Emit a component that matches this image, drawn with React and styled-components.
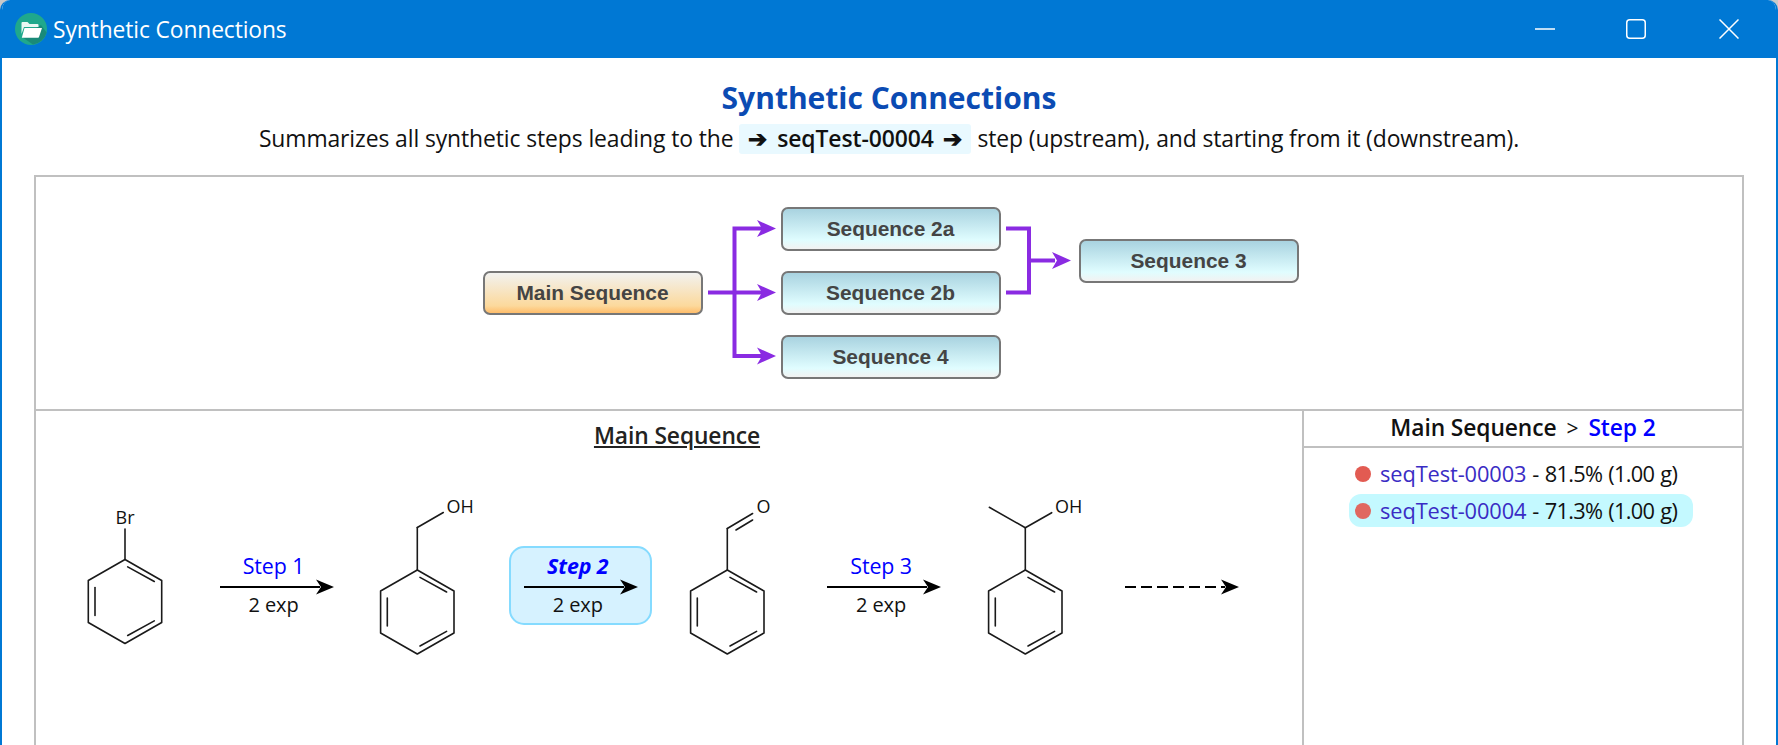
import React from "react";
import styled, { createGlobalStyle } from "styled-components";

const Global = createGlobalStyle`
  html, body { margin: 0; padding: 0; height: 745px; overflow: hidden; background: #c9c9c9; }
  body { font-family: "Open Sans", "Noto Sans", sans-serif; color: #111; }
`;

const Window = styled.div`
  box-sizing: border-box;
  height: 745px;
  display: flex;
  flex-direction: column;
  overflow: hidden;
  background: #fff;
  border-radius: 10px 10px 0 0;
  border-left: 2px solid #0078d4;
  border-right: 2px solid #0078d4;
`;

const TitleBar = styled.header`
  flex: none;
  height: 58px;
  margin: 0 -2px;
  display: flex;
  align-items: center;
  padding: 0 39px 0 15px;
  background: #0078d4;
  color: #fff;
`;

const AppTitle = styled.div`
  margin-left: 6px;
  padding-top: 1px;
  font-size: 22.8px;
  letter-spacing: -0.1px;
  flex: 1;
`;

const Controls = styled.div`
  display: flex;
  gap: 71px;
  align-items: center;
  svg:last-child { margin-left: 2px; }
`;

const Content = styled.main`
  flex: 1;
  min-height: 0;
  padding: 0 32px;
  display: flex;
  flex-direction: column;
`;

const Heading = styled.h1`
  margin: 17px 0 0;
  height: 46px;
  line-height: 46px;
  text-align: center;
  font-size: 30px;
  font-weight: 700;
  color: #0b4bb3;
`;

const Subtitle = styled.p`
  margin: -1px 0 0;
  height: 38px;
  line-height: 38px;
  text-align: center;
  font-size: 22.9px;
  letter-spacing: -0.1px;
  color: #111;
  white-space: nowrap;
`;

const Pill = styled.span`
  display: inline-block;
  height: 30px;
  line-height: 30px;
  margin: 0 6px;
  padding: 0 9px;
  word-spacing: 4px;
  background: #e9f9ff;
  border-radius: 3px;
  font-weight: 600;
`;

const Frame = styled.section`
  margin-top: 17px;
  flex: none;
  height: 640px;
  border: 2px solid #c0c0c0;
  display: flex;
  flex-direction: column;
`;

const ChartPanel = styled.div`
  flex: none;
  height: 232px;
  box-sizing: content-box;
  border-bottom: 2px solid #c0c0c0;
  display: flex;
  align-items: center;
  justify-content: center;
  padding-left: 3px;
`;

const Diagram = styled.div`
  position: relative;
  width: 816px;
  height: 172px;
`;

const Links = styled.svg`
  position: absolute;
  left: 0;
  top: 0;
`;

const Node = styled.div`
  position: absolute;
  box-sizing: border-box;
  width: 220px;
  height: 44px;
  left: ${(p) => p.$x}px;
  top: ${(p) => p.$y}px;
  display: flex;
  align-items: center;
  justify-content: center;
  border: 2px solid #777;
  border-radius: 7px;
  background: ${(p) =>
    p.$main
      ? "linear-gradient(#f2f2f0 0%, #fcd99c 82%, #ffbd6b 100%)"
      : "linear-gradient(#a9d3e0 0%, #e0fdff 78%, #f2f2f2 100%)"};
  font-family: "Liberation Sans", Arial, sans-serif;
  font-weight: 700;
  font-size: 20.9px;
  color: #444;
`;

const Lower = styled.div`
  flex: 1;
  display: flex;
  min-height: 0;
`;

const SchemePanel = styled.div`
  flex: 1;
  min-width: 0;
`;

const SchemeTitle = styled.h2`
  margin: 9px 0 38px;
  padding-left: 16px;
  height: 32px;
  line-height: 32px;
  text-align: center;
  font-size: 22.8px;
  font-weight: 600;
  letter-spacing: -0.1px;
  text-decoration: underline;
  color: #222;
`;

const SchemeRow = styled.div`
  display: flex;
  align-items: flex-start;
`;

const Reaction = styled.div`
  flex: none;
  box-sizing: border-box;
  width: 143px;
  height: 79px;
  margin-top: 56px;
  display: flex;
  flex-direction: column;
  align-items: center;
  border: 2px solid ${(p) => (p.$active ? "#85dbff" : "transparent")};
  border-radius: 15px;
  background: ${(p) => (p.$active ? "#d6f2ff" : "transparent")};
`;

const StepLabel = styled.div`
  height: 30.7px;
  padding-right: 6px;
  line-height: 35px;
  font-size: 21.4px;
  letter-spacing: -0.1px;
  color: #0000ff;
  font-weight: ${(p) => (p.$active ? 700 : 400)};
  font-style: ${(p) => (p.$active ? "italic" : "normal")};
`;

const ExpCount = styled.div`
  padding-right: 6px;
  line-height: 20px;
  font-size: 20px;
  letter-spacing: -0.1px;
  color: #111;
`;

const StepArrowSvg = styled.svg`
  flex: none;
  display: block;
`;

const DetailPanel = styled.aside`
  flex: none;
  box-sizing: border-box;
  width: 440px;
  border-left: 2px solid #c0c0c0;
`;

const DetailHeader = styled.div`
  box-sizing: border-box;
  height: 37px;
  line-height: 33px;
  border-bottom: 2px solid #c0c0c0;
  text-align: center;
  font-size: 22.8px;
  letter-spacing: -0.1px;
  font-weight: 600;
  color: #111;
  white-space: nowrap;
`;

const Crumb = styled.span`
  font-weight: 400;
  font-size: 21px;
  margin: 0 10px;
`;

const StepName = styled.span`
  color: #0000ff;
`;

const ExpList = styled.ul`
  list-style: none;
  margin: 0;
  padding: 9px 4px 0 0;
  display: flex;
  flex-direction: column;
  align-items: center;
  gap: 4px;
`;

const ExpRow = styled.li`
  box-sizing: border-box;
  height: 33px;
  width: 344px;
  padding-left: 6px;
  display: flex;
  align-items: center;
  border-radius: 12px;
  background: ${(p) => (p.$active ? "#c4f9ff" : "transparent")};
  font-size: 21.8px;
  letter-spacing: -0.1px;
  white-space: pre;
  color: #111;
`;

const Dot = styled.span`
  flex: none;
  width: 16px;
  height: 16px;
  border-radius: 50%;
  margin-right: 9px;
  background: #e25b52;
  opacity: ${(p) => (p.$active ? 0.92 : 1)};
`;

const ExpLink = styled.span`
  color: #3a2cc4;
`;

const ExpStat = styled.span`
  letter-spacing: -0.7px;
  word-spacing: 1px;
`;

const AtomLabel = styled.text`
  font-family: "Open Sans", "Noto Sans", sans-serif;
  font-size: 18px;
  fill: #111;
`;

const Bond = ({ x1, y1, x2, y2 }) => (
  <line x1={x1} y1={y1} x2={x2} y2={y2} stroke="#1a1a1a" strokeWidth="1.6" strokeLinecap="round" />
);

const Benzene = ({ cx, cy }) => (
  <g fill="none" stroke="#1a1a1a" strokeWidth="1.6" strokeLinecap="round" strokeLinejoin="round">
    <polygon
      points={`${cx},${cy - 42} ${cx + 36.7},${cy - 21} ${cx + 36.7},${cy + 21} ${cx},${cy + 42} ${cx - 36.7},${cy + 21} ${cx - 36.7},${cy - 21}`}
    />
    <line x1={cx + 2.7} y1={cy - 34.6} x2={cx + 29.3} y2={cy - 20} />
    <line x1={cx + 2.7} y1={cy + 34} x2={cx + 29.3} y2={cy + 19.4} />
    <line x1={cx - 30} y1={cy - 14} x2={cx - 30} y2={cy + 14} />
  </g>
);

const Mol = ({ width, children }) => (
  <svg width={width} height="180" viewBox={`0 0 ${width} 180`} style={{ flex: "none", display: "block" }}>
    {children}
  </svg>
);

const StepArrow = ({ dashed }) => (
  <StepArrowSvg width="114" height="16" viewBox="0 0 114 16">
    <line x1="0" y1="8" x2="100" y2="8" stroke="#000" strokeWidth="2" strokeDasharray={dashed ? "11 5" : undefined} />
    <path d="M96 0.5 L114 8 L96 15.5 L101 8 Z" fill="#000" />
  </StepArrowSvg>
);

const Reactions = ({ label, active }) => (
  <Reaction $active={active}>
    <StepLabel $active={active}>{label}</StepLabel>
    <StepArrow />
    <ExpCount>2 exp</ExpCount>
  </Reaction>
);

const AppIcon = () => (
  <svg width="32" height="32" viewBox="0 0 32 32" style={{ flex: "none" }}>
    <circle cx="16" cy="16" r="16" fill="#1fa88c" />
    <path d="M7 24 L18 31.5 A16 16 0 0 0 31.6 19.5 L26 12 Z" fill="#1a8a78" />
    <path d="M6.5 10 a1 1 0 0 1 1 -1 h5 l2 2 h8 a1 1 0 0 1 1 1 v2 H9 l-2.5 7 Z" fill="#e9f7f3" />
    <path d="M9.5 15 H27 L24 24 a1 1 0 0 1 -1 .7 H6.8 Z" fill="#fff" />
  </svg>
);

const ControlIcons = () => (
  <Controls>
    <svg width="20" height="20" viewBox="0 0 20 20">
      <line x1="0" y1="10" x2="20" y2="10" stroke="#fff" strokeWidth="1.5" />
    </svg>
    <svg width="20" height="20" viewBox="0 0 20 20">
      <rect x="0.75" y="0.75" width="18.5" height="18.5" rx="3" fill="none" stroke="#fff" strokeWidth="1.5" />
    </svg>
    <svg width="20" height="20" viewBox="0 0 20 20">
      <path d="M0.5 0.5 L19.5 19.5 M19.5 0.5 L0.5 19.5" stroke="#fff" strokeWidth="1.5" />
    </svg>
  </Controls>
);

const PURPLE = "#8a2be2";
const Head = ({ x, y }) => (
  <path d={`M${x - 19} ${y - 8.5} L${x} ${y} L${x - 19} ${y + 8.5} L${x - 14} ${y} Z`} fill={PURPLE} />
);

const nodes = [
  { label: "Main Sequence", x: 0, y: 64, main: true },
  { label: "Sequence 2a", x: 298, y: 0 },
  { label: "Sequence 2b", x: 298, y: 64 },
  { label: "Sequence 4", x: 298, y: 128 },
  { label: "Sequence 3", x: 596, y: 32 },
];

export default function App() {
  return (
    <>
      <Global />
      <Window>
        <TitleBar>
          <AppIcon />
          <AppTitle>Synthetic Connections</AppTitle>
          <ControlIcons />
        </TitleBar>
        <Content>
          <Heading>Synthetic Connections</Heading>
          <Subtitle>
            Summarizes all synthetic steps leading to the<Pill>➔ seqTest-00004 ➔</Pill>step (upstream), and starting from it (downstream).
          </Subtitle>
          <Frame>
            <ChartPanel>
              <Diagram>
                <Links width="816" height="172" viewBox="0 0 816 172">
                  <g fill="none" stroke={PURPLE} strokeWidth="4">
                    <path d="M225 85.5 H279" />
                    <path d="M279 21.5 H251.5 V149 H279" />
                    <path d="M523 21.5 H546 V85.5 H523" />
                    <path d="M546 53.5 H572" />
                  </g>
                  <Head x={293} y={21.5} />
                  <Head x={293} y={85.5} />
                  <Head x={293} y={149} />
                  <Head x={588} y={53.5} />
                </Links>
                {nodes.map((n) => (
                  <Node key={n.label} $x={n.x} $y={n.y} $main={n.main}>
                    {n.label}
                  </Node>
                ))}
              </Diagram>
            </ChartPanel>
            <Lower>
              <SchemePanel>
                <SchemeTitle>Main Sequence</SchemeTitle>
                <SchemeRow>
                  <Mol width={169}>
                    <Benzene cx={89} cy={111.5} />
                    <Bond x1={89} y1={69.5} x2={89} y2={39} />
                    <AtomLabel x={89} y={34} textAnchor="middle">Br</AtomLabel>
                  </Mol>
                  <Reactions label="Step 1" />
                  <Mol width={161.3}>
                    <Benzene cx={69.3} cy={122} />
                    <Bond x1={69.3} y1={80} x2={69.3} y2={37.5} />
                    <Bond x1={69.3} y1={37.5} x2={95.3} y2={22.5} />
                    <AtomLabel x={98.5} y={23}>OH</AtomLabel>
                  </Mol>
                  <Reactions label="Step 2" active />
                  <Mol width={160.3}>
                    <Benzene cx={75.3} cy={122} />
                    <Bond x1={75.3} y1={80} x2={75.3} y2={38.5} />
                    <Bond x1={75.3} y1={38.5} x2={100.6} y2={23.5} />
                    <Bond x1={84} y1={40} x2={100.6} y2={30} />
                    <AtomLabel x={104.5} y={23}>O</AtomLabel>
                  </Mol>
                  <Reactions label="Step 3" />
                  <Mol width={155}>
                    <Benzene cx={69.3} cy={122} />
                    <Bond x1={69.3} y1={80} x2={69.3} y2={37.7} />
                    <Bond x1={69.3} y1={37.7} x2={33.3} y2={17.3} />
                    <Bond x1={69.3} y1={37.7} x2={95.7} y2={22.7} />
                    <AtomLabel x={99} y={23}>OH</AtomLabel>
                  </Mol>
                  <Reaction>
                    <StepLabel />
                    <StepArrow dashed />
                  </Reaction>
                </SchemeRow>
              </SchemePanel>
              <DetailPanel>
                <DetailHeader>
                  Main Sequence<Crumb>&gt;</Crumb><StepName>Step 2</StepName>
                </DetailHeader>
                <ExpList>
                  <ExpRow>
                    <Dot />
                    <ExpLink>seqTest-00003</ExpLink><ExpStat> - 81.5% (1.00 g)</ExpStat>
                  </ExpRow>
                  <ExpRow $active>
                    <Dot $active />
                    <ExpLink>seqTest-00004</ExpLink><ExpStat> - 71.3% (1.00 g)</ExpStat>
                  </ExpRow>
                </ExpList>
              </DetailPanel>
            </Lower>
          </Frame>
        </Content>
      </Window>
    </>
  );
}
